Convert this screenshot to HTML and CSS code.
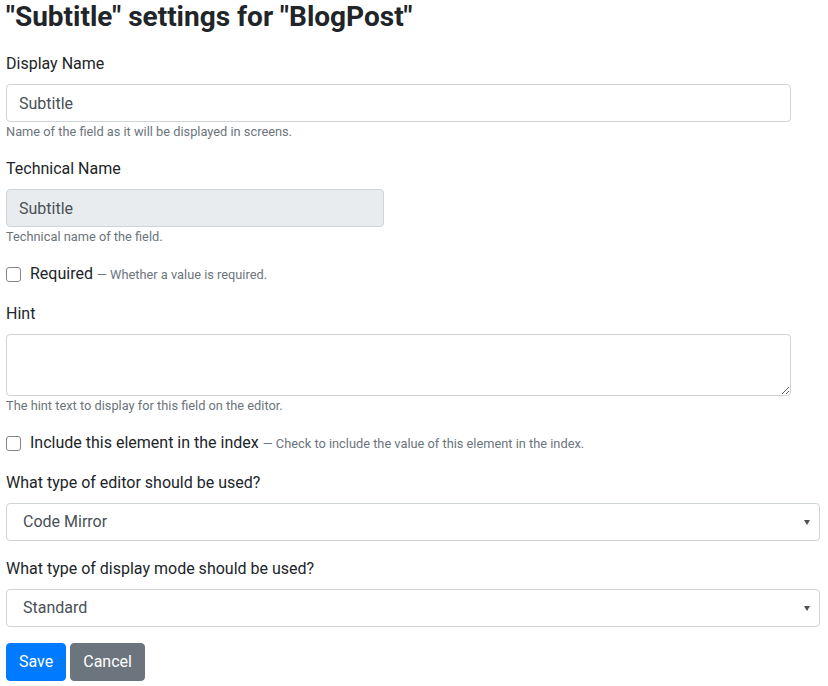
FILE: index.html
```html
<!DOCTYPE html>
<html lang="en">
<head>
<meta charset="utf-8">
<title>Subtitle settings</title>
<link rel="stylesheet" href="styles.css">
</head>
<body>
<div class="page">
  <h2 class="title">"Subtitle" settings for "BlogPost"</h2>

  <div class="form-group">
    <label class="label" for="displayName">Display Name</label>
    <input class="control w-wide" id="displayName" type="text" value="Subtitle">
    <span class="hint block">Name of the field as it will be displayed in screens.</span>
  </div>

  <div class="form-group">
    <label class="label" for="techName">Technical Name</label>
    <input class="control w-half" id="techName" type="text" value="Subtitle" disabled>
    <span class="hint block">Technical name of the field.</span>
  </div>

  <div class="form-group check-row">
    <input class="check" type="checkbox" id="required">
    <label class="check-label" for="required">Required</label>
    <span class="hint">— Whether a value is required.</span>
  </div>

  <div class="form-group">
    <label class="label" for="hint">Hint</label>
    <textarea class="control w-wide area" id="hint" rows="2"></textarea>
    <span class="hint block">The hint text to display for this field on the editor.</span>
  </div>

  <div class="form-group check-row">
    <input class="check" type="checkbox" id="index">
    <label class="check-label" for="index">Include this element in the index</label>
    <span class="hint">— Check to include the value of this element in the index.</span>
  </div>

  <div class="form-group">
    <label class="label" for="editor">What type of editor should be used?</label>
    <select class="control select" id="editor">
      <option>Code Mirror</option>
    </select>
  </div>

  <div class="form-group">
    <label class="label" for="display">What type of display mode should be used?</label>
    <select class="control select" id="display">
      <option>Standard</option>
    </select>
  </div>

  <div class="actions">
    <button class="btn btn-primary" type="button">Save</button>
    <button class="btn btn-secondary" type="button">Cancel</button>
  </div>
</div>
</body>
</html>
```

FILE: styles.css
```css
* { box-sizing: border-box; }

html, body {
  margin: 0;
  padding: 0;
  background: #fff;
}

body {
  font-family: Roboto, "Liberation Sans", sans-serif;
  font-size: 16px;
  line-height: 1.5;
  color: #212529;
}

.page {
  padding: 0 8px 6px 6px;
}

.title {
  margin: 0 0 18px 0;
  font-size: 28px;
  line-height: 34px;
  font-weight: 700;
}

.form-group {
  margin-bottom: 16px;
}

.label {
  display: block;
  margin-bottom: 8px;
}

.control {
  display: block;
  height: 38px;
  padding: 6px 12px;
  font: inherit;
  font-size: 16px;
  line-height: 1.5;
  color: #495057;
  background: #fff;
  border: 1px solid #ced4da;
  border-radius: 4px;
  outline: none;
}

.w-wide { width: 785px; }
.w-half { width: 378px; }

.control:disabled {
  background: #e9ecef;
  color: #495057;
  opacity: 1;
}

.area {
  height: 62px;
  resize: vertical;
}

.select {
  width: 100%;
  appearance: none;
  -webkit-appearance: none;
  padding-left: 16px;
  background-image: url("data:image/svg+xml;utf8,<svg xmlns='http://www.w3.org/2000/svg' width='6' height='5' viewBox='0 0 6 5'><path d='M0 0h6L3 5z' fill='%23505050'/></svg>");
  background-repeat: no-repeat;
  background-position: right 9px center;
  background-size: 6px 5px;
}

.hint {
  font-size: 12.8px;
  line-height: 19px;
  color: #6c757d;
}

.hint.block { display: block; }

.check-row {
  display: flex;
  align-items: center;
  height: 24px;
}

.check {
  appearance: none;
  -webkit-appearance: none;
  width: 15px;
  height: 15px;
  margin: 0 9px 0 0;
  border: 1px solid #858585;
  border-radius: 3px;
  background: #fff;
  flex: none;
}

.check-label {
  margin-right: 4px;
}

.actions {
  display: flex;
  gap: 4px;
}

.btn {
  font: inherit;
  font-size: 16px;
  line-height: 1.5;
  padding: 6px 12px;
  border: 1px solid transparent;
  border-radius: 4px;
  color: #fff;
  cursor: pointer;
}

.btn-primary { background: #007bff; border-color: #007bff; }
.btn-secondary { background: #6c757d; border-color: #6c757d; }
```
